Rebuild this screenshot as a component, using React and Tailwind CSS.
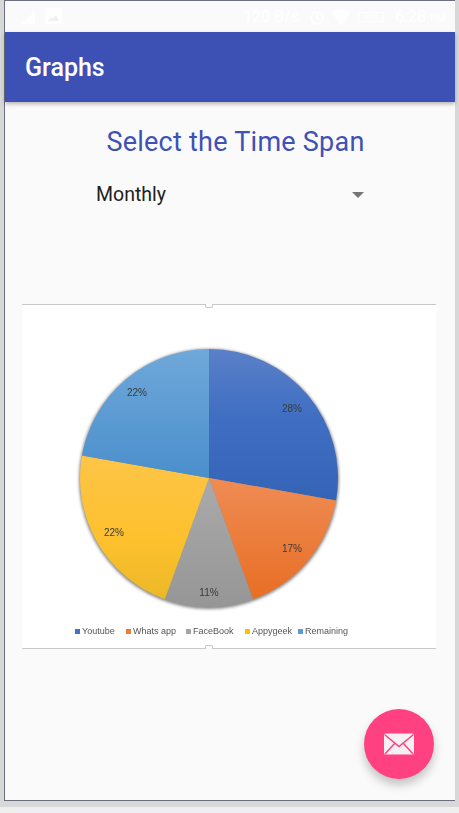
import React from "react";

const C = { x: 209, y: 478, r: 129 };
function pt(a) {
  const t = ((a - 90) * Math.PI) / 180;
  return [C.x + C.r * Math.cos(t), C.y + C.r * Math.sin(t)];
}
function wedge(a, b) {
  const [x1, y1] = pt(a);
  const [x2, y2] = pt(b);
  return `M${C.x} ${C.y}L${x1} ${y1}A${C.r} ${C.r} 0 ${b - a > 180 ? 1 : 0} 1 ${x2} ${y2}Z`;
}
const slices = [
  { a: 0, b: 100, id: "g1" },
  { a: 100, b: 160, id: "g2" },
  { a: 160, b: 200, id: "g3" },
  { a: 200, b: 280, id: "g4" },
  { a: 280, b: 360, id: "g5" },
];
const labels = [
  ["28%", 292, 412],
  ["17%", 292, 552],
  ["11%", 209, 596],
  ["22%", 114, 536],
  ["22%", 137, 396],
];

function Pie() {
  return (
    <svg width="414" height="343" viewBox="22 305 414 343" className="block blur-[0.4px]">
      <defs>
        <linearGradient id="g1" x1="0" y1="0" x2="0" y2="1"><stop offset="0" stopColor="#5b80c8" /><stop offset="0.45" stopColor="#3f6ec2" /><stop offset="1" stopColor="#3564b7" /></linearGradient>
        <linearGradient id="g2" x1="0" y1="0" x2="0" y2="1"><stop offset="0" stopColor="#ef8c54" /><stop offset="1" stopColor="#e86e25" /></linearGradient>
        <linearGradient id="g3" x1="0" y1="0" x2="0" y2="1"><stop offset="0" stopColor="#aaaaaa" /><stop offset="1" stopColor="#969696" /></linearGradient>
        <linearGradient id="g4" x1="0" y1="0" x2="0" y2="1"><stop offset="0" stopColor="#fdc548" /><stop offset="0.6" stopColor="#fdc02d" /><stop offset="1" stopColor="#ecb827" /></linearGradient>
        <linearGradient id="g5" x1="0" y1="0" x2="0" y2="1"><stop offset="0" stopColor="#70a8da" /><stop offset="1" stopColor="#4a8fcb" /></linearGradient>
        <filter id="sh" x="-10%" y="-10%" width="120%" height="120%"><feGaussianBlur stdDeviation="1.5" /></filter>
      </defs>
      <circle cx="209" cy="479" r="130" fill="#888" filter="url(#sh)" />
      {slices.map((s) => (
        <path key={s.id} d={wedge(s.a, s.b)} fill={`url(#${s.id})`} />
      ))}
      {labels.map(([t, x, y], i) => (
        <text key={i} x={x} y={y} textAnchor="middle" fontSize="10" fill="#3a3a3a" fontFamily="'Liberation Sans', sans-serif">{t}</text>
      ))}
    </svg>
  );
}

const legend = [
  ["Youtube", "bg-[#4472c4]", "w-[51px]"],
  ["Whats app", "bg-[#ed7d31]", "w-[60px]"],
  ["FaceBook", "bg-[#a5a5a5]", "w-[59px]"],
  ["Appygeek", "bg-[#ffc000]", "w-[53px]"],
  ["Remaining", "bg-[#5b9bd5]", "w-[60px]"],
];

export default function App() {
  return (
    <div className="w-[459px] h-[813px] bg-[#d8d8d8] overflow-hidden font-['Roboto',sans-serif]">
      <div className="ml-[4px] w-[451px] h-[801px] border-l border-t border-b border-[#6b7080] bg-[#fafafa] flex flex-col relative">
        <div className="h-[31px] shrink-0 flex items-center pl-[14px] pr-[10px] text-[#ffffff] text-[16px] opacity-90">
          <svg width="18" height="16" viewBox="0 0 18 16"><path d="M2 15L16 2V15Z" fill="#fff" /></svg>
          <svg width="17" height="17" viewBox="0 0 17 17" className="ml-[8px]"><rect width="17" height="16" rx="1" fill="#fff" /><path d="M3 13l3-4 2 2 3-4 3 6z" fill="#eee" /></svg>
          <span className="ml-auto">120 B/s</span>
          <svg width="16" height="16" viewBox="0 0 16 16" fill="none" stroke="#fff" strokeWidth="1.5" className="ml-[10px]"><circle cx="8" cy="9" r="6" /><path d="M8 5.5V9l2 1.5" /></svg>
          <svg width="20" height="16" viewBox="0 0 20 16" className="ml-[6px]"><path d="M0 3Q10-3 20 3L10 16Z" fill="#fff" /></svg>
          <span className="ml-[7px] w-[26px] h-[10px] border border-white text-[7px] leading-[8px] text-center">15%</span>
          <span className="ml-[11px]">6:28 <span className="text-[10px]">PM</span></span>
        </div>
        <header className="h-[70px] shrink-0 bg-[#3d51b4] flex items-center pl-[20px] pt-[2px] text-white text-[25px] font-medium shadow-[0_2px_4px_rgba(0,0,0,0.28)] relative">
          Graphs
        </header>
        <h1 className="mt-[24px] text-center text-[27px] leading-[32px] text-[#3f51b5] pl-[11px] tracking-[0.25px]">Select the Time Span</h1>
        <div className="mt-[21px] ml-[91px] w-[268px] h-[32px] flex items-center justify-between text-[19.5px] text-[#212121]">
          <span>Monthly</span>
          <span className="w-0 h-0 border-l-[6px] border-r-[6px] border-t-[6px] border-l-transparent border-r-transparent border-t-[#757575]" />
        </div>
        <div className="mt-[93px] ml-[17px] w-[414px] h-[345px] bg-white border-t border-b border-[#c8c8c8] relative">
          <span className="absolute -top-[1px] left-[183px] w-[8px] h-[4px] bg-[#fafafa] border border-t-0 border-[#c8c8c8] rounded-b-[2px]" />
          <span className="absolute -bottom-[1px] left-[183px] w-[8px] h-[4px] bg-[#fafafa] border border-b-0 border-[#c8c8c8] rounded-t-[2px]" />
          <Pie />
          <div className="absolute left-[53px] top-[320px] flex items-center text-[9px] leading-[12px] text-[#555] blur-[0.3px] font-['Liberation_Sans',sans-serif]">
            {legend.map(([t, c, w]) => (
              <span key={t} className={`flex items-center gap-[2px] ${w}`}>
                <i className={`w-[5px] h-[5px] ${c}`} />
                {t}
              </span>
            ))}
          </div>
        </div>
        <button className="absolute left-[359px] top-[708px] w-[70px] h-[70px] rounded-full bg-[#ff4081] flex items-center justify-center shadow-[0_6px_10px_rgba(0,0,0,0.22)]">
          <svg width="32" height="22" viewBox="0 0 32 22">
            <rect x="1" y="0.5" width="30" height="21" rx="1.5" fill="#f7f0f3" />
            <path d="M1.5 1.5L16 13.5 30.5 1.5M2 21l10-11M30 21L20 10" fill="none" stroke="#ff4081" strokeWidth="1.5" />
          </svg>
        </button>
      </div>
      <div className="mt-[6px] h-[6px] bg-[#efefef] w-full" />
    </div>
  );
}
